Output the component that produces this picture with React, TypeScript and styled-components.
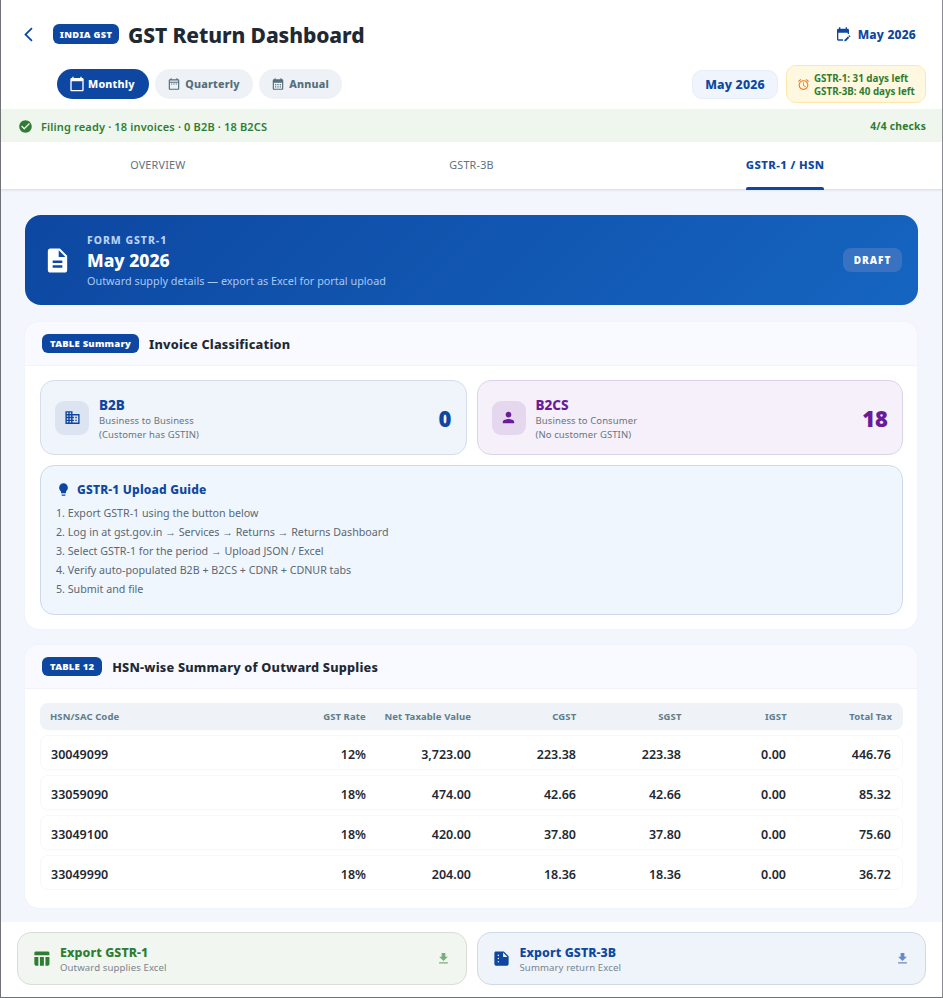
import React from "react";
import styled, { createGlobalStyle } from "styled-components";
import {
  MdArrowBackIosNew,
  MdCalendarToday,
  MdOutlineDateRange,
  MdCalendarMonth,
  MdEditCalendar,
  MdCheckCircle,
  MdAlarm,
  MdDescription,
  MdBusiness,
  MdPerson,
  MdLightbulb,
  MdTableChart,
  MdSummarize,
  MdFileDownload,
} from "react-icons/md";

const GlobalStyle = createGlobalStyle`
  html, body {
    margin: 0;
    padding: 0;
    background: #fff;
  }
  * {
    box-sizing: border-box;
  }
`;

const Screen = styled.div`
  width: 943px;
  height: 998px;
  display: flex;
  flex-direction: column;
  overflow: hidden;
  font-family: "Noto Sans", sans-serif;
  color: #1f2933;
  background: #fff;
  border-left: 1px solid #6f7378;
  border-right: 1px solid #8a8e93;
  border-bottom: 1px solid #6f7378;
`;

const Header = styled.header`
  height: 109px;
  padding: 0 16px 0 20px;
  display: flex;
  flex-direction: column;
`;

const TopRow = styled.div`
  height: 68px;
  display: flex;
  align-items: center;
`;

const BackButton = styled.div`
  width: 32px;
  display: flex;
  align-items: center;
  color: #0d47a1;
  font-size: 17px;
  margin-left: -1px;
  margin-right: 1px;
`;

const IndiaBadge = styled.span`
  background: #0d47a1;
  color: #fff;
  font-size: 9.3px;
  font-weight: 900;
  letter-spacing: 0.3px;
  height: 20px;
  width: 66px;
  border-radius: 6px;
  display: flex;
  align-items: center;
  justify-content: center;
`;

const Title = styled.h1`
  margin: 0 0 0 9px;
  padding-top: 2px;
  font-size: 21px;
  line-height: 30px;
  font-weight: 800;
  letter-spacing: -0.1px;
  color: #1f2933;
  flex: 1;
`;

const MonthLink = styled.div`
  display: flex;
  align-items: center;
  gap: 7px;
  margin-right: 10px;
  color: #0d47a1;
  font-size: 12px;
  font-weight: 800;
  letter-spacing: 0.2px;
  svg {
    font-size: 16px;
  }
`;

const ControlRow = styled.div`
  display: flex;
  align-items: center;
  height: 40px;
  margin-top: -4px;
  padding-left: 36px;
`;

const PeriodPills = styled.div`
  display: flex;
  gap: 6.5px;
  flex: 1;
`;

const PeriodPill = styled.div<{ $active?: boolean }>`
  height: 30px;
  padding: ${(p) => (p.$active ? "0 14px 0 12px" : "0 13px 0 12px")};
  border-radius: 15px;
  display: flex;
  align-items: center;
  gap: ${(p) => (p.$active ? "3px" : "4px")};
  font-size: 10.7px;
  font-weight: 800;
  letter-spacing: 0.2px;
  background: ${(p) => (p.$active ? "#0d47a1" : "#eef2f7")};
  color: ${(p) => (p.$active ? "#fff" : "#546e7a")};
  svg {
    font-size: ${(p) => (p.$active ? "16px" : "14px")};
  }
`;

const MonthPill = styled.div`
  width: 86px;
  height: 29px;
  border-radius: 10px;
  background: #f0f5fd;
  border: 1px solid #e8eef8;
  color: #0d47a1;
  font-size: 12.3px;
  font-weight: 800;
  letter-spacing: 0.2px;
  display: flex;
  align-items: center;
  justify-content: center;
`;

const DeadlineBox = styled.div`
  width: 140px;
  height: 38px;
  margin-left: 8px;
  border-radius: 10px;
  background: #fff8e1;
  border: 1px solid #ffe7a8;
  display: flex;
  align-items: center;
  gap: 4px;
  padding-left: 10px;
  color: #ef7c22;
  svg {
    font-size: 13px;
    flex: none;
  }
`;

const DeadlineText = styled.div`
  font-size: 9.8px;
  line-height: 13px;
  font-weight: 700;
  color: #2e7d32;
  white-space: nowrap;
  padding-top: 2px;
`;

const StatusBar = styled.div`
  height: 33px;
  background: #eef6ee;
  display: flex;
  align-items: center;
  justify-content: space-between;
  padding: 1px 16px 0 17px;
  color: #2e7d32;
`;

const StatusLeft = styled.div`
  display: flex;
  align-items: center;
  gap: 8px;
  font-size: 11px;
  font-weight: 600;
  letter-spacing: 0.15px;
  svg {
    font-size: 15px;
  }
`;

const StatusRight = styled.div`
  font-size: 10.3px;
  font-weight: 700;
  letter-spacing: 0.2px;
`;

const Tabs = styled.nav`
  height: 48px;
  display: grid;
  grid-template-columns: repeat(3, 1fr);
  border-bottom: 1px solid #dfe2e6;
  box-shadow: 0 1px 2px rgba(0, 0, 0, 0.06);
  position: relative;
  background: #fff;
`;

const Tab = styled.div<{ $active?: boolean }>`
  display: flex;
  justify-content: center;
  align-items: center;
  padding-bottom: 2px;
  font-size: ${(p) => (p.$active ? "11.3px" : "10.8px")};
  letter-spacing: ${(p) => (p.$active ? "0.4px" : "0.2px")};
  font-weight: ${(p) => (p.$active ? 800 : 400)};
  color: ${(p) => (p.$active ? "#0d47a1" : "#607080")};
`;

const TabLabel = styled.span<{ $active?: boolean }>`
  position: relative;
  ${(p) =>
    p.$active &&
    `
    &::after {
      content: "";
      position: absolute;
      left: 0;
      right: 0;
      top: 30px;
      height: 3px;
      border-radius: 2px 2px 0 0;
      background: #0d47a1;
    }
  `}
`;

const Content = styled.main`
  flex: 1;
  min-height: 0;
  background: #f3f6fc;
  padding: 25px 25px 0 24px;
  display: flex;
  flex-direction: column;
`;

const Hero = styled.section`
  height: 90px;
  width: 893px;
  border-radius: 16px;
  background: linear-gradient(135deg, #0d47a1, #1565c0);
  display: flex;
  align-items: center;
  padding: 0 16px 0 19px;
  color: #fff;
  flex: none;
`;

const HeroIcon = styled.div`
  font-size: 29px;
  width: 43px;
  display: flex;
  align-items: center;
  margin-left: -1px;
`;

const HeroText = styled.div`
  flex: 1;
  padding-top: 2px;
  margin-left: 1px;
`;

const HeroEyebrow = styled.div`
  font-size: 10.4px;
  line-height: 14px;
  font-weight: 800;
  letter-spacing: 1px;
  color: #b9d2f5;
`;

const HeroMonth = styled.div`
  font-size: 17.5px;
  line-height: 24px;
  font-weight: 800;
  margin-top: 1px;
`;

const HeroSub = styled.div`
  font-size: 10.85px;
  line-height: 16px;
  margin-top: 1px;
  color: #a8c8f4;
`;

const DraftChip = styled.div`
  width: 59px;
  height: 24px;
  border-radius: 8px;
  background: #3a72c2;
  font-size: 10px;
  font-weight: 900;
  letter-spacing: 1px;
  display: flex;
  align-items: center;
  justify-content: center;
`;

const Card = styled.section<{ $height: number; $gap: number }>`
  width: 892px;
  height: ${(p) => p.$height}px;
  margin-top: ${(p) => p.$gap}px;
  border-radius: 14px;
  background: #fff;
  overflow: hidden;
  box-shadow: 0 0 2px rgba(13, 71, 161, 0.06);
  flex: none;
`;

const CardHeader = styled.div`
  height: 44px;
  background: #f8faff;
  border-bottom: 1px solid #f0f3f8;
  display: flex;
  align-items: center;
  gap: 10px;
  padding: 0 17px;
`;

const TableBadge = styled.span`
  height: 19px;
  padding: 0 8px;
  border-radius: 6px;
  background: #0d47a1;
  color: #fff;
  font-size: 9.5px;
  font-weight: 900;
  letter-spacing: 0.2px;
  display: flex;
  align-items: center;
  margin-top: -1px;
`;

const CardTitle = styled.h2`
  margin: 0;
  font-size: 12.7px;
  font-weight: 800;
  letter-spacing: 0.2px;
  color: #1f2933;
`;

const CardBody = styled.div`
  padding: 14px 14px 0 15px;
  display: flex;
  flex-direction: column;
`;

const ClassGrid = styled.div`
  display: grid;
  grid-template-columns: 1fr 1fr;
  gap: 10px;
`;

const ClassCard = styled.div<{ $tone: "blue" | "purple" }>`
  height: 75px;
  border-radius: 14px;
  display: flex;
  align-items: center;
  padding: 0 14px;
  background: ${(p) => (p.$tone === "blue" ? "#f0f4fb" : "#f5f0f9")};
  border: 1px solid ${(p) => (p.$tone === "blue" ? "#d6dde9" : "#dcd4e6")};
`;

const ClassIcon = styled.div<{ $tone: "blue" | "purple" }>`
  width: 34px;
  height: 34px;
  border-radius: 9px;
  display: flex;
  align-items: center;
  justify-content: center;
  font-size: 17px;
  flex: none;
  margin-right: 10px;
  background: ${(p) => (p.$tone === "blue" ? "#dce4f2" : "#e5d8ee")};
  color: ${(p) => (p.$tone === "blue" ? "#0d47a1" : "#6a1b9a")};
`;

const ClassText = styled.div`
  flex: 1;
  padding-top: 5px;
`;

const ClassName = styled.div<{ $tone: "blue" | "purple" }>`
  font-size: 13.5px;
  line-height: 15px;
  font-weight: 800;
  margin-bottom: 1px;
  color: ${(p) => (p.$tone === "blue" ? "#0d47a1" : "#6a1b9a")};
`;

const ClassDesc = styled.div`
  font-size: 9.5px;
  line-height: 14px;
  color: #68757f;
  letter-spacing: 0.1px;
`;

const ClassCount = styled.div<{ $tone: "blue" | "purple" }>`
  font-size: 22px;
  font-weight: 900;
  color: ${(p) => (p.$tone === "blue" ? "#0d47a1" : "#6a1b9a")};
`;

const Guide = styled.div`
  margin-top: 10px;
  height: 150px;
  border-radius: 14px;
  background: #f0f6fe;
  border: 1px solid #cdd9e6;
  padding: 13px 15px;
`;

const GuideTitle = styled.div`
  display: flex;
  align-items: center;
  gap: 6px;
  height: 20px;
  margin-bottom: 5px;
  font-size: 12px;
  font-weight: 800;
  color: #0d47a1;
  letter-spacing: 0.2px;
  svg {
    font-size: 15px;
  }
`;

const GuideLine = styled.div`
  font-size: 10.7px;
  line-height: 19px;
  color: #5a6872;
`;

const HsnTable = styled.div`
  display: flex;
  flex-direction: column;
  gap: 5px;
`;

const HeadRow = styled.div`
  display: grid;
  grid-template-columns: 2fr repeat(6, 1fr);
  height: 27px;
  align-items: center;
  padding: 0 11px 1px 10px;
  border-radius: 8px;
  background: #eff2f7;
  font-size: 9.5px;
  font-weight: 700;
  color: #607d8b;
  letter-spacing: 0.1px;
`;

const BodyRow = styled.div`
  display: grid;
  grid-template-columns: 2fr repeat(6, 1fr);
  height: 35px;
  align-items: center;
  padding: 3px 11px 0 10px;
  border-radius: 8px;
  border: 1px solid #f5f7fa;
  background: #fff;
  font-size: 12.5px;
  font-weight: 600;
  color: #1f2933;
`;

const Cell = styled.div<{ $left?: boolean }>`
  text-align: ${(p) => (p.$left ? "left" : "right")};
  white-space: nowrap;
`;

const Footer = styled.footer`
  height: 75px;
  flex: none;
  background: #fff;
  padding: 10px 16px 0;
  display: grid;
  grid-template-columns: 1fr 1fr;
  gap: 10px;
  align-items: start;
`;

const ExportButton = styled.div<{ $tone: "green" | "blue" }>`
  height: 53px;
  border-radius: 14px;
  display: flex;
  align-items: center;
  padding: 0 15px 0 16px;
  background: ${(p) => (p.$tone === "green" ? "#f1f6f1" : "#eff3fa")};
  border: 1px solid ${(p) => (p.$tone === "green" ? "#d6ded6" : "#d0d9e8")};
  color: ${(p) => (p.$tone === "green" ? "#2e7d32" : "#0d47a1")};
`;

const ExportIcon = styled.div`
  font-size: 19px;
  width: 28px;
  margin-left: -2px;
  display: flex;
  align-items: center;
`;

const ExportText = styled.div`
  flex: 1;
  padding-top: 2px;
`;

const ExportName = styled.div`
  font-size: 12.4px;
  line-height: 16px;
  font-weight: 800;
  letter-spacing: 0.1px;
`;

const ExportSub = styled.div`
  font-size: 9.6px;
  line-height: 14px;
  color: #78858e;
  letter-spacing: 0.1px;
`;

const ExportArrow = styled.div`
  font-size: 15px;
  opacity: 0.6;
  display: flex;
  align-items: center;
`;

const guideSteps = [
  "1. Export GSTR-1 using the button below",
  "2. Log in at gst.gov.in → Services → Returns → Returns Dashboard",
  "3. Select GSTR-1 for the period → Upload JSON / Excel",
  "4. Verify auto-populated B2B + B2CS + CDNR + CDNUR tabs",
  "5. Submit and file",
];

const hsnRows = [
  ["30049099", "12%", "3,723.00", "223.38", "223.38", "0.00", "446.76"],
  ["33059090", "18%", "474.00", "42.66", "42.66", "0.00", "85.32"],
  ["33049100", "18%", "420.00", "37.80", "37.80", "0.00", "75.60"],
  ["33049990", "18%", "204.00", "18.36", "18.36", "0.00", "36.72"],
];

const hsnHead = ["HSN/SAC Code", "GST Rate", "Net Taxable Value", "CGST", "SGST", "IGST", "Total Tax"];

export default function App() {
  return (
    <>
      <GlobalStyle />
      <Screen>
        <Header>
          <TopRow>
            <BackButton>
              <MdArrowBackIosNew />
            </BackButton>
            <IndiaBadge>INDIA GST</IndiaBadge>
            <Title>GST Return Dashboard</Title>
            <MonthLink>
              <MdEditCalendar />
              May 2026
            </MonthLink>
          </TopRow>
          <ControlRow>
            <PeriodPills>
              <PeriodPill $active>
                <MdCalendarToday />
                Monthly
              </PeriodPill>
              <PeriodPill>
                <MdOutlineDateRange />
                Quarterly
              </PeriodPill>
              <PeriodPill>
                <MdCalendarMonth />
                Annual
              </PeriodPill>
            </PeriodPills>
            <MonthPill>May 2026</MonthPill>
            <DeadlineBox>
              <MdAlarm />
              <DeadlineText>
                GSTR-1: 31 days left
                <br />
                GSTR-3B: 40 days left
              </DeadlineText>
            </DeadlineBox>
          </ControlRow>
        </Header>

        <StatusBar>
          <StatusLeft>
            <MdCheckCircle />
            Filing ready · 18 invoices · 0 B2B · 18 B2CS
          </StatusLeft>
          <StatusRight>4/4 checks</StatusRight>
        </StatusBar>

        <Tabs>
          <Tab>OVERVIEW</Tab>
          <Tab>GSTR-3B</Tab>
          <Tab $active>
            <TabLabel $active>GSTR-1 / HSN</TabLabel>
          </Tab>
        </Tabs>

        <Content>
          <Hero>
            <HeroIcon>
              <MdDescription />
            </HeroIcon>
            <HeroText>
              <HeroEyebrow>FORM GSTR-1</HeroEyebrow>
              <HeroMonth>May 2026</HeroMonth>
              <HeroSub>Outward supply details — export as Excel for portal upload</HeroSub>
            </HeroText>
            <DraftChip>DRAFT</DraftChip>
          </Hero>

          <Card $height={307} $gap={17}>
            <CardHeader>
              <TableBadge>TABLE Summary</TableBadge>
              <CardTitle>Invoice Classification</CardTitle>
            </CardHeader>
            <CardBody>
              <ClassGrid>
                <ClassCard $tone="blue">
                  <ClassIcon $tone="blue">
                    <MdBusiness />
                  </ClassIcon>
                  <ClassText>
                    <ClassName $tone="blue">B2B</ClassName>
                    <ClassDesc>
                      Business to Business
                      <br />
                      (Customer has GSTIN)
                    </ClassDesc>
                  </ClassText>
                  <ClassCount $tone="blue">0</ClassCount>
                </ClassCard>
                <ClassCard $tone="purple">
                  <ClassIcon $tone="purple">
                    <MdPerson />
                  </ClassIcon>
                  <ClassText>
                    <ClassName $tone="purple">B2CS</ClassName>
                    <ClassDesc>
                      Business to Consumer
                      <br />
                      (No customer GSTIN)
                    </ClassDesc>
                  </ClassText>
                  <ClassCount $tone="purple">18</ClassCount>
                </ClassCard>
              </ClassGrid>
              <Guide>
                <GuideTitle>
                  <MdLightbulb />
                  GSTR-1 Upload Guide
                </GuideTitle>
                {guideSteps.map((step) => (
                  <GuideLine key={step}>{step}</GuideLine>
                ))}
              </Guide>
            </CardBody>
          </Card>

          <Card $height={263} $gap={16}>
            <CardHeader>
              <TableBadge>TABLE 12</TableBadge>
              <CardTitle>HSN-wise Summary of Outward Supplies</CardTitle>
            </CardHeader>
            <CardBody>
              <HsnTable>
                <HeadRow>
                  {hsnHead.map((label, i) => (
                    <Cell key={label} $left={i === 0}>
                      {label}
                    </Cell>
                  ))}
                </HeadRow>
                {hsnRows.map((row) => (
                  <BodyRow key={row[0]}>
                    {row.map((value, i) => (
                      <Cell key={i} $left={i === 0}>
                        {value}
                      </Cell>
                    ))}
                  </BodyRow>
                ))}
              </HsnTable>
            </CardBody>
          </Card>
        </Content>

        <Footer>
          <ExportButton $tone="green">
            <ExportIcon>
              <MdTableChart />
            </ExportIcon>
            <ExportText>
              <ExportName>Export GSTR-1</ExportName>
              <ExportSub>Outward supplies Excel</ExportSub>
            </ExportText>
            <ExportArrow>
              <MdFileDownload />
            </ExportArrow>
          </ExportButton>
          <ExportButton $tone="blue">
            <ExportIcon>
              <MdSummarize />
            </ExportIcon>
            <ExportText>
              <ExportName>Export GSTR-3B</ExportName>
              <ExportSub>Summary return Excel</ExportSub>
            </ExportText>
            <ExportArrow>
              <MdFileDownload />
            </ExportArrow>
          </ExportButton>
        </Footer>
      </Screen>
    </>
  );
}
